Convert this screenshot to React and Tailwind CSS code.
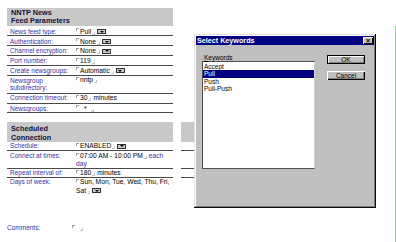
import React from "react";

const font = { fontFamily: '"Liberation Sans", Arial, Helvetica, sans-serif' };

function Corner() {
  return <span className="inline-block shrink-0 w-[3px] h-[3px] border-t border-l border-[#9c9c9c] mr-[1px] self-start mt-[0.5px]" />;
}
function Handle() {
  return <span className="inline-block shrink-0 w-[3px] h-[3px] border-r border-b border-[#c4c4c4] ml-[1px] mr-[1px] self-end mb-[1px]" />;
}
function Drop() {
  return (
    <span className="inline-flex shrink-0 items-center justify-center w-[9px] h-[5px] ml-[1px] bg-[#c8c8c8] border border-[#303030]">
      <span className="w-0 h-0 border-x-[2px] border-x-transparent border-t-[2px] border-t-black" />
    </span>
  );
}

function Row({ label, children, h, line = true, pad }) {
  return (
    <div className={`flex box-border ${h} ${line ? "border-b border-[#4a4a4a]" : ""}`}>
      <div className={`w-[69px] shrink-0 pl-[3px] text-[6.5px] text-[#3333aa] ${pad}`}>{label}</div>
      <div className={`flex-1 text-[6.7px] text-black ${pad}`}>{children}</div>
    </div>
  );
}

function Line({ children }) {
  return <div className="flex items-center h-[8px] whitespace-nowrap">{children}</div>;
}

function Win95Button({ children, def }) {
  return (
    <div
      className={`box-border w-[38px] h-[9px] flex items-center justify-center text-[6.5px] text-black bg-[#c0c0c0] ${
        def
          ? "border border-black shadow-[inset_1px_1px_#ffffff,inset_-1px_-1px_#808080]"
          : "shadow-[inset_1px_1px_#ffffff,inset_-1px_-1px_#000000,inset_-2px_-2px_#808080]"
      }`}
    >
      {children}
    </div>
  );
}

export default function App() {
  return (
    <div className="relative w-[396px] h-[242px] bg-white overflow-hidden leading-[8px]" style={font}>
      <div className="pl-[7px] pt-[8px]">
        {/* Section 1 */}
        <div className="w-[166px]">
          <div className="h-[18px] bg-[#c8c8c8] pl-[4px] pt-[1px] text-[7.3px] font-bold leading-[8px] text-[#101040]">
            <div>NNTP News</div>
            <div>Feed Parameters</div>
          </div>
          <Row label="News feed type:" h="h-[10px]" pad="pt-[1.5px]">
            <Line><Corner />Pull<Handle /><Drop /></Line>
          </Row>
          <Row label="Authentication:" h="h-[10px]" pad="pt-[1.5px]">
            <Line><Corner />None<Handle /><Drop /></Line>
          </Row>
          <Row label="Channel encryption:" h="h-[10px]" pad="pt-[1px]">
            <Line><Corner />None<Handle /><Drop /></Line>
          </Row>
          <Row label="Port number:" h="h-[10px]" pad="pt-[1px]">
            <Line><Corner />119<Handle /></Line>
          </Row>
          <Row label="Create newsgroups:" h="h-[10px]" pad="pt-[0.5px]">
            <Line><Corner />Automatic<Handle /><Drop /></Line>
          </Row>
          <Row
            label={<div className="leading-[7px]"><div>Newsgroup</div><div>subdirectory:</div></div>}
            h="h-[18px]"
            pad="pt-[0.5px]"
          >
            <div className="flex items-center h-[7px] whitespace-nowrap"><Corner />nntp<Handle /></div>
          </Row>
          <Row label="Connection timeout:" h="h-[10px]" pad="pt-[0px]">
            <Line><Corner />30<Handle /><span className="ml-[1px]">minutes</span></Line>
          </Row>
          <Row label="Newsgroups:" h="h-[9px]" pad="pt-[0.5px]">
            <Line><Corner /><span className="ml-[4px] mr-[3px]">*</span><Handle /></Line>
          </Row>
        </div>

        {/* Section 2 */}
        <div className="flex mt-[9px]">
          <div className="w-[166px]">
            <div className="h-[20px] bg-[#c8c8c8] pl-[4px] pt-[1.5px] text-[7.3px] font-bold leading-[9px] text-[#101040]">
              <div>Scheduled</div>
              <div>Connection</div>
            </div>
            <Row label="Schedule:" h="h-[9px]" pad="pt-[0px]">
              <Line><Corner />ENABLED<Handle /><Drop /></Line>
            </Row>
            <Row label="Connect at times:" h="h-[18px]" pad="pt-[1px]">
              <Line><Corner />07:00 AM - 10:00 PM<Handle /><span className="ml-[1px] text-[#3333aa]">each</span></Line>
              <Line><span className="text-[#3333aa]">day</span></Line>
            </Row>
            <Row label="Repeat interval of:" h="h-[9px]" pad="pt-[0px]">
              <Line><Corner />180<Handle /><span className="ml-[1px]">minutes</span></Line>
            </Row>
            <Row label="Days of week:" h="h-[18px]" line={false} pad="pt-[0px]">
              <Line><Corner />Sun, Mon, Tue, Wed, Thu, Fri,</Line>
              <div className="flex items-center h-[9px] whitespace-nowrap">Sat<Handle /><Drop /></div>
            </Row>
          </div>
          <div className="ml-[8px] w-[150px]">
            <div className="h-[20px] bg-[#c8c8c8]" />
            <div className="h-[9px] box-border border-b border-[#4a4a4a]" />
            <div className="h-[18px] box-border border-b border-[#4a4a4a]" />
            <div className="h-[9px] box-border border-b border-[#4a4a4a]" />
          </div>
        </div>

        {/* Comments */}
        <div className="flex mt-[28px]">
          <div className="w-[65px] text-[6.5px] text-[#3333aa]">Comments:</div>
          <div className="flex items-center h-[8px]">
            <Corner />
            <span className="w-[3px]" />
            <Handle />
          </div>
        </div>
      </div>

      {/* Dialog window */}
      <div className="absolute left-[194px] top-[34px] w-[182px] h-[174px] box-border p-[2px] bg-[#c0c0c0] bg-[image:repeating-conic-gradient(#c6c6c6_0_25%,#b9b9b9_0_50%)] bg-[length:2px_2px] shadow-[inset_-1px_-1px_#0a0a0a,inset_1px_1px_#dfdfdf,inset_-2px_-2px_#808080,inset_2px_2px_#ffffff]">
        <div className="h-[9px] bg-[#000080] flex items-center justify-between pl-[1px] pr-[1px]">
          <span className="text-[7.2px] font-bold text-white leading-[9px]">Select Keywords</span>
          <span className="box-border w-[10px] h-[7px] bg-[#c0c0c0] flex items-center justify-center text-[7px] leading-[7px] text-black font-bold shadow-[inset_1px_1px_#ffffff,inset_-1px_-1px_#000000]">
            ×
          </span>
        </div>
        <div className="flex">
          <div className="ml-[6px]">
            <div className="mt-[9px] text-[6.5px] leading-[7px] text-black pl-[2px]">
              <span className="underline">K</span>eywords
            </div>
            <div className="box-border w-[113px] h-[108px] bg-white border border-[#505050] border-r-[#d4d4d4] pt-[1px] text-[6.5px] leading-[7.33px] text-black">
              <div className="pl-[1px] h-[7.33px]">Accept</div>
              <div className="pl-[1px] h-[7.33px] bg-[#000080] text-white">Pull</div>
              <div className="pl-[1px] h-[7.33px]">Push</div>
              <div className="pl-[1px] h-[7.33px]">Pull-Push</div>
            </div>
          </div>
          <div className="ml-[12px] mt-[10px] flex flex-col gap-[7px]">
            <Win95Button def><span className="underline">O</span>K</Win95Button>
            <Win95Button>Cancel</Win95Button>
          </div>
        </div>
      </div>

      {/* right edge green line */}
      <div className="absolute right-0 top-[26px] bottom-0 w-[1px] bg-[#8fdc8f]" />
    </div>
  );
}
